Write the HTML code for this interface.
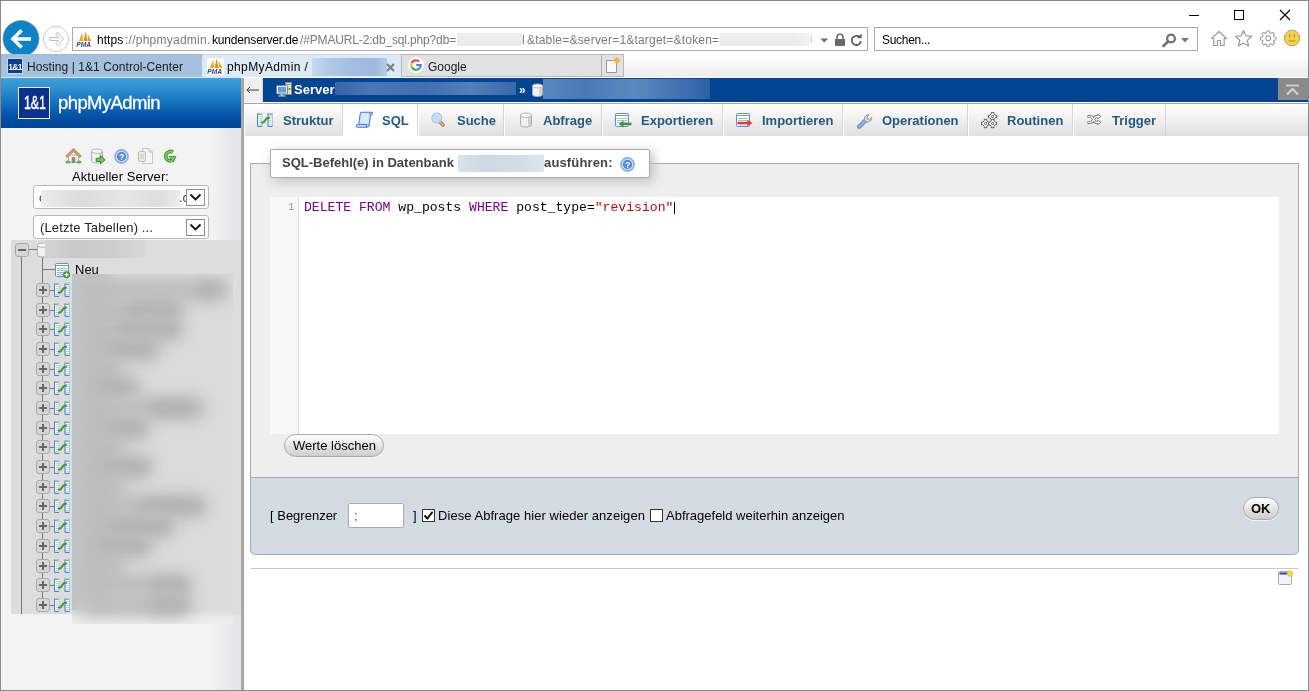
<!DOCTYPE html>
<html>
<head>
<meta charset="utf-8">
<title>phpMyAdmin</title>
<style>
*{box-sizing:border-box;margin:0;padding:0}
html,body{width:1309px;height:691px;overflow:hidden;background:#fff}
body{font-family:"Liberation Sans",sans-serif;font-size:13px;color:#000;position:relative}
.a{position:absolute}
#win{left:0;top:0;width:1309px;height:691px;background:#fff;overflow:hidden}
#frame{left:0;top:0;width:1309px;height:691px;border:1px solid #8a8a8a;pointer-events:none}
.t{position:absolute;white-space:nowrap;line-height:1}
.t,.mt span,svg.tx{will-change:transform}
/* browser chrome */
#addr{left:72px;top:27px;width:796px;height:24px;border:1px solid #ababab;background:#fff}
#srch{left:874px;top:27px;width:324px;height:24px;border:1px solid #ababab;background:#fff}
#tabbar{left:1px;top:55px;width:1307px;height:22px}
.tab{position:absolute;top:-1px;height:23px}
/* sidebar */
#side{left:1px;top:77px;width:240px;height:613px;background:#f3f3f3}
#shead{left:0;top:1px;width:240px;height:50px;background:linear-gradient(#3da1d9 0%,#2f91d0 20%,#1a76c0 45%,#0458ab 70%,#00489c 90%,#00469a 100%)}
#split{left:241px;top:78px;width:3px;height:612px;background:linear-gradient(90deg,#b0b0b0,#9f9f9f)}
/* main */
#main{left:244px;top:77px;width:1064px;height:613px;background:#fff}
#crumb{left:0;top:1px;width:1064px;height:24px;background:#004494}
#tabs{left:0;top:27px;width:1064px;height:32px;background:linear-gradient(#ffffff,#e0e0e0)}
.mt{position:absolute;top:0;height:32px;background:linear-gradient(#ffffff,#e0e0e0);border-right:1px solid #d5d5d5;border-left:1px solid #fff;font-weight:bold;font-size:13px;color:#235a81}
.mt span{position:absolute;top:9.600px;line-height:1;white-space:nowrap}
.mt.act{background:#fff}

.sel{width:176px;height:24px;border:1px solid #b9b9b9;border-radius:3px;background:#fff}
.sel .dd{z-index:2;position:absolute;right:3px;top:3px;width:19px;height:17px;border:1px solid #8e8e8e;background:#fdfdfd;display:flex;align-items:center;justify-content:center}
.pm{position:absolute;width:14px;height:14px;border:1px solid #a8a8a8;border-radius:3px;background:#d6d6d6}
.pm i.h{position:absolute;left:2px;top:5px;width:8px;height:2px;background:#666}
.pm i.v{position:absolute;left:5px;top:2px;width:2px;height:8px;background:#666}
.bl{position:absolute;background:#bcbcbc;border-radius:11px;filter:blur(8px)}
.bl2{position:absolute;background:#b2b2b2;border-radius:7px;filter:blur(7px)}

.btn{border:1px solid #aaa;border-radius:12px;background:linear-gradient(#ffffff,#cccccc);box-shadow:0 1px 0 #f4f4f4}
.cb{width:13px;height:13px;border:1px solid #333;background:#fff}
.cb svg{position:absolute;left:0;top:0}
</style>
</head>
<body>
<div id="win" class="a">


<!-- ===== browser chrome ===== -->
<div class="a" style="left:1px;top:52px;width:1307px;height:25px;background:linear-gradient(#ffffff 10%,#ededed 100%)"></div>
<!-- window buttons -->
<div class="a" style="left:1189px;top:15px;width:10px;height:1px;background:#000"></div>
<div class="a" style="left:1234px;top:10px;width:10px;height:10px;border:1px solid #000"></div>
<svg class="a" style="left:1279px;top:9px" width="12" height="12" viewBox="0 0 12 12"><path d="M1 1 L11 11 M11 1 L1 11" stroke="#000" stroke-width="1.1" fill="none"/></svg>
<!-- back / forward -->
<svg class="a" style="left:1px;top:19px" width="40" height="40" viewBox="0 0 40 40"><circle cx="20" cy="19.600" r="18" fill="#0b84c6" stroke="#7f8d96" stroke-width=".8"/><path d="M12.500 19.900 H29.900 M20.600 11.200 L11.900 19.900 L20.600 28.600" stroke="#fff" stroke-width="3.500" fill="none" stroke-linecap="butt" stroke-linejoin="miter"/></svg>
<svg class="a" style="left:42px;top:25px" width="28" height="28" viewBox="0 0 28 28"><circle cx="14" cy="14" r="12.600" fill="#fff" stroke="#c8c8c8" stroke-width="1"/><path d="M7.800 12.500 H16.600 L13.600 9.200 L15.600 7.400 L21.400 14 L15.600 20.600 L13.600 18.800 L16.600 15.500 H7.800Z" fill="#fff" stroke="#bfbfbf" stroke-width="1" stroke-linejoin="miter"/></svg>
<!-- address bar -->
<div id="addr" class="a">
  <svg class="a tx" style="left:3px;top:3px" width="17" height="17" viewBox="0 0 17 17"><path d="M3 10 L6.2 1.5 L7 10Z" fill="#f7a51c"/><path d="M7.6 10 L9.6 0.5 L11.6 10Z" fill="#f08a14"/><path d="M11.6 3 L15.6 10 L12.2 10Z" fill="#f7a51c"/><text x="0.3" y="16.3" font-family="Liberation Sans" font-size="6.6" font-weight="bold" font-style="italic" fill="#35457f">PMA</text></svg>
  <span class="t" style="left:24px;top:6px;font-size:12px;letter-spacing:.05px;color:#000">https</span>
  <span class="t" style="left:51.6px;top:6px;font-size:12px;letter-spacing:.25px;color:#7a7a7a">://phpmyadmin.</span>
  <span class="t" style="left:138.8px;top:6px;font-size:12px;letter-spacing:-.17px;color:#000">kundenserver.de</span>
  <span class="t" style="left:226.6px;top:6px;font-size:12px;letter-spacing:-.15px;color:#7a7a7a">/#PMAURL-2:db_sql.php?db=</span>
  <div class="a" style="left:384px;top:5px;width:65px;height:13px;background:#ececec"></div>
  <span class="t" style="left:448.6px;top:6px;font-size:12px;color:#7a7a7a">l</span>
  <span class="t" style="left:453.6px;top:6px;font-size:12px;letter-spacing:.2px;color:#7a7a7a">&amp;table=&amp;server=1&amp;target=&amp;token=</span>
  <div class="a" style="left:647px;top:5px;width:90px;height:13px;background:linear-gradient(90deg,#ececec 85%,#f4f4f4)"></div>
  <span class="t" style="left:736.500px;top:6px;font-size:11px;color:#c4c4c4">i</span>
  <svg class="a" style="left:746.500px;top:10px" width="8.500" height="5" viewBox="0 0 9 5"><path d="M0.3 0.3 H8.7 L4.5 4.600Z" fill="#6e6e6e"/></svg>
  <svg class="a" style="left:761px;top:5px" width="12" height="14" viewBox="0 0 12 14"><path d="M3 6.500 V4.200 A3 3 0 0 1 9 4.200 V6.500" stroke="#6a6a6a" stroke-width="1.600" fill="none"/><rect x="1" y="6" width="10" height="7" fill="#6a6a6a"/></svg>
  <svg class="a" style="left:777px;top:5px" width="13" height="14" viewBox="0 0 13 14"><path d="M9.800 4.300 A4.600 4.600 0 1 0 10.900 8.200" stroke="#5e5e5e" stroke-width="1.800" fill="none"/><path d="M6.800 5.300 H11.600 V0.500Z" fill="#5e5e5e"/></svg>
</div>
<!-- search box -->
<div id="srch" class="a">
  <span class="t" style="left:7px;top:6px;font-size:12px;letter-spacing:-.3px;color:#000">Suchen...</span>
  <svg class="a" style="left:287px;top:5px" width="15" height="15" viewBox="0 0 15 15"><circle cx="9" cy="5.500" r="3.900" stroke="#727272" stroke-width="2.300" fill="none"/><path d="M6 8.500 L1.500 13" stroke="#727272" stroke-width="2.600" stroke-linecap="round"/></svg>
  <svg class="a" style="left:306px;top:10px" width="8" height="5" viewBox="0 0 8 5"><path d="M0 0 H8 L4 4.5Z" fill="#7a7a7a"/></svg>
</div>
<!-- right icons -->
<svg class="a" style="left:1210px;top:30px" width="18" height="17" viewBox="0 0 18 17"><path d="M1.5 8.5 L9 1.5 L16.5 8.5 H14.2 V15.5 H10.5 V10.5 H7.5 V15.5 H3.8 V8.5Z" fill="#fff" stroke="#9b9b9b" stroke-width="1.2" stroke-linejoin="round"/></svg>
<svg class="a" style="left:1234px;top:29px" width="19" height="18" viewBox="0 0 19 18"><path d="M9.5 1.5 L11.9 6.9 L17.7 7.4 L13.3 11.3 L14.6 17 L9.5 14 L4.4 17 L5.7 11.3 L1.3 7.4 L7.1 6.9Z" fill="#fff" stroke="#9b9b9b" stroke-width="1.2" stroke-linejoin="round"/></svg>
<svg class="a" style="left:1260px;top:30px" width="16.500" height="16.500" viewBox="0 0 18 18"><g fill="#fff" stroke="#9b9b9b" stroke-width="1.1" stroke-linejoin="round"><path d="M7.6 1 h2.8 l.4 2.2 1.3.55 1.85-1.3 2 2 -1.3 1.85 .55 1.3 2.2.4 v2.8 l-2.2.4 -.55 1.3 1.3 1.85 -2 2 -1.85-1.3 -1.3.55 -.4 2.2 h-2.8 l-.4-2.2 -1.3-.55 -1.85 1.3 -2-2 1.3-1.85 -.55-1.3 -2.2-.4 v-2.8 l2.2-.4 .55-1.3 -1.3-1.85 2-2 1.85 1.3 1.3-.55z"/><circle cx="9" cy="9" r="2.6"/></g></svg>
<svg class="a" style="left:1283px;top:29px" width="18" height="18" viewBox="0 0 18 18"><circle cx="9" cy="9" r="7.8" fill="#f6d345" stroke="#a9a08a" stroke-width="1"/><rect x="6.100" y="5.200" width="1.300" height="3.200" fill="#a8923f"/><rect x="10.600" y="5.200" width="1.300" height="3.200" fill="#a8923f"/><path d="M5.600 10.800 Q9 13.800 12.400 10.800" stroke="#a8923f" stroke-width="1.100" fill="none"/></svg>

<!-- tab strip -->
<div id="tabbar" class="a">
  <div class="tab" style="left:0;width:201px;background:#a4c1dd;border-top:1px solid #9db9d5">
    <svg class="a tx" style="left:6px;top:3px" width="16" height="16" viewBox="0 0 16 16"><rect x=".5" y=".5" width="15" height="15" fill="#0d3d8c" stroke="#c9d6ea"/><text x="1.2" y="11.5" font-family="Liberation Sans" font-size="8.5" font-weight="bold" fill="#fff" letter-spacing="-.7">1&amp;1</text></svg>
    <span class="t" style="left:26px;top:5.600px;font-size:12px;letter-spacing:.08px;color:#1a1a1a">Hosting | 1&amp;1 Control-Center</span>
  </div>
  <div class="tab" style="left:201px;width:199px;background:#dceaf8;border-top:1px solid #c9d8e8">
    <svg class="a tx" style="left:5px;top:3px" width="17" height="17" viewBox="0 0 17 17"><rect width="17" height="17" fill="#fff"/><path d="M3 10 L6.2 1.5 L7 10Z" fill="#f7a51c"/><path d="M7.6 10 L9.6 0.5 L11.6 10Z" fill="#f08a14"/><path d="M11.6 3 L15.6 10 L12.2 10Z" fill="#f7a51c"/><text x="0.3" y="16.3" font-family="Liberation Sans" font-size="6.6" font-weight="bold" font-style="italic" fill="#35457f">PMA</text></svg>
    <span class="t" style="left:25px;top:6px;font-size:12px;letter-spacing:.38px;color:#000">phpMyAdmin /</span>
    <div class="a" style="left:110px;top:3px;width:75px;height:18px;background:linear-gradient(90deg,#c9dbef,#b4cbe6 18%,#a2bddf 55%,#9db9dc 85%,#b9cee8)"></div>
    <svg class="a" style="left:184px;top:8px" width="9" height="9" viewBox="0 0 9 9"><path d="M1 1 L8 8 M8 1 L1 8" stroke="#7c7f84" stroke-width="2.200"/></svg>
  </div>
  <div class="tab" style="left:400px;width:201px;background:#e1e1e1;border-top:1px solid #b9b9b9;border-bottom:1px solid #b9b9b9;border-right:1px solid #b0b0b0;border-left:1px solid #b9b9b9">
    <svg class="a" style="left:6px;top:2px" width="16" height="16" viewBox="0 0 16 16"><circle cx="8" cy="8" r="8" fill="#fff"/><path d="M8 3.2 A4.8 4.8 0 0 0 3.7 5.9" stroke="#ea4335" stroke-width="2.1" fill="none"/><path d="M8 3.2 A4.8 4.8 0 0 1 11.3 4.5" stroke="#ea4335" stroke-width="2.1" fill="none"/><path d="M3.7 5.9 A4.8 4.8 0 0 0 3.7 10.1" stroke="#fbbc05" stroke-width="2.1" fill="none"/><path d="M3.7 10.1 A4.8 4.8 0 0 0 11.2 11.6" stroke="#34a853" stroke-width="2.1" fill="none"/><path d="M11.2 11.6 A4.8 4.8 0 0 0 12.8 8 H8.2" stroke="#4285f4" stroke-width="2.1" fill="none"/></svg>
    <span class="t" style="left:26px;top:5.600px;font-size:12px;color:#1a1a1a">Google</span>
  </div>
  <div class="tab" style="left:601px;width:22px;background:#e1e1e1;border-top:1px solid #b9b9b9;border-bottom:1px solid #b9b9b9;border-right:1px solid #b9b9b9">
    <svg class="a" style="left:2px;top:1px" width="17" height="18" viewBox="0 0 17 18"><path d="M2.500 4.500 H12.500 V16.500 H2.500Z" fill="#fafafa" stroke="#9a9a9a"/><path d="M12.700 1 V8 M9.200 4.500 H16.200 M10.300 2.100 L15.100 6.900 M15.100 2.100 L10.300 6.900" stroke="#f7a823" stroke-width="1.050"/><circle cx="12.700" cy="4.500" r="1.500" fill="#f9b233"/></svg>
  </div>
</div>


<!-- ===== sidebar ===== -->
<svg width="0" height="0" style="position:absolute">
 <defs>
  <g id="i-tbl">
   <rect x=".5" y="1.5" width="4.5" height="12.5" fill="#fdfdff" stroke="#a9c6ee"/><path d="M.5 1.5 V14.5 H5" fill="none" stroke="#4f86d6"/>
   <path d="M1 2.500 H4.5" stroke="#7cc05a"/><path d="M1.5 4.500 H4.5 M1.5 6.500 H4.5 M1.5 8.500 H4.5 M1.5 10.500 H4.5 M1.5 12.500 H4.5" stroke="#c2d4ee"/>
   <rect x="11" y="1.5" width="4.5" height="12.5" fill="#fdfdff" stroke="#a9c6ee"/><path d="M11 1.5 V14.5 H15.5" fill="none" stroke="#4f86d6"/>
   <path d="M11.500 2.500 H15" stroke="#7cc05a"/><path d="M12 4.500 H15 M12 6.500 H15 M12 8.500 H15 M12 10.500 H15 M12 12.500 H15" stroke="#c2d4ee"/>
   <path d="M4.800 10.600 L6.800 10.200 L9.800 6.200 L12 5.800" stroke="#3f9a2f" stroke-width="2.100" stroke-linecap="round" stroke-linejoin="round" fill="none"/>
  </g>
  <g id="i-db">
   <path d="M1.5 3.2 V12.8 C1.5 14.2 4 15 7 15 C10 15 12.5 14.2 12.5 12.8 V3.2" fill="#f1f1f1" stroke="#b0b0b0"/>
   <path d="M9 4.6 V14.6 C11 14.3 12 13.6 12 12.8 V3.8Z" fill="#cfcfcf"/>
   <ellipse cx="7" cy="3.2" rx="5.5" ry="2.2" fill="#fafafa" stroke="#b5b5b5"/>
  </g>
  <g id="i-help">
   <circle cx="7" cy="7" r="6.400" fill="#7ea6e4" stroke="#8db0e8" stroke-width="1"/><circle cx="7" cy="7" r="4.900" fill="#5688d4" stroke="#dbe7f9" stroke-width="1"/>
   <text x="4.600" y="10" font-family="Liberation Sans" font-weight="bold" font-size="8.500" fill="#fff">?</text>
  </g>
 </defs>
</svg>
<div id="side" class="a">
  <div class="a" style="left:208px;top:51px;width:32px;height:562px;background:linear-gradient(90deg,#f3f3f3,#e0e4e6)"></div>
  <div class="a" style="left:0;top:0;width:240px;height:1px;background:#d9e8f5"></div>
  <div id="shead" class="a">
    <div class="a" style="left:17px;top:9px;width:32px;height:32px;background:#0a318c;border:1px solid #e8eef7"></div>
    <span class="t" style="left:23px;top:16px;font-size:18.6px;font-weight:normal;color:#fff;transform-origin:0 0;transform:scaleX(.66);-webkit-text-stroke:.6px #fff">1&amp;1</span>
    <span class="t" style="left:57px;top:15.5px;font-size:18.5px;letter-spacing:-.6px;color:#fff;-webkit-text-stroke:.3px #fff">phpMyAdmin</span>
  </div>
  <!-- toolbar icons -->
  <svg class="a" style="left:64px;top:71px" width="17" height="16" viewBox="0 0 17 16"><rect x="3.500" y="7" width="10" height="7.500" fill="#f2f2f2" stroke="#a3a3a3" stroke-width=".8"/><rect x="7" y="9.500" width="3" height="5" fill="#8e8e8e" stroke="#777" stroke-width=".5"/><ellipse cx="3" cy="14" rx="2.600" ry="1.600" fill="#62b544"/><ellipse cx="14" cy="14" rx="2.600" ry="1.600" fill="#62b544"/><path d="M1.200 9 L8.500 2 L15.800 9" stroke="#bf8646" stroke-width="2.800" fill="none" stroke-linejoin="miter"/><path d="M1.800 8.400 L8.500 2 L15.200 8.400" stroke="#e6c08c" stroke-width=".9" fill="none"/></svg>
  <svg class="a" style="left:89px;top:71px" width="17" height="17" viewBox="0 0 17 17"><use href="#i-db"/><path d="M6.200 10.200 H10.500 V7.800 L15.200 11.800 L10.500 15.800 V13.400 H6.200Z" fill="#78c456" stroke="#348a26" stroke-width="1"/></svg>
  <svg class="a tx" style="left:113px;top:72px" width="15" height="15" viewBox="0 0 14 14"><use href="#i-help"/></svg>
  <svg class="a" style="left:136px;top:70px" width="17" height="18" viewBox="0 0 17 18"><path d="M5.5 1.5 H12 L15.5 5 V16.5 H5.5Z" fill="#f6f6f6" stroke="#c4c4c4"/><path d="M12 1.5 V5 H15.5" fill="#e4e4e4" stroke="#c4c4c4"/><rect x="1.500" y="4.500" width="7" height="10" rx="1.500" fill="#ebebeb" stroke="#bdbdbd"/><path d="M4 7 V12 M6 7 V12" stroke="#c9c9c9"/></svg>
  <svg class="a" style="left:162px;top:72px" width="14" height="15" viewBox="0 0 14 15"><path d="M10 3.200 A4.700 4.700 0 1 0 8.200 11.800" stroke="#3c8f2f" stroke-width="3.600" fill="none"/><path d="M10 3.200 A4.700 4.700 0 1 0 8.200 11.800" stroke="#7cc65c" stroke-width="1.900" fill="none"/><path d="M6.200 7.400 H12.900 L10.200 13.200Z" fill="#7cc65c" stroke="#3c8f2f" stroke-width=".9" stroke-linejoin="round"/></svg>
  <span class="t" style="left:71px;top:93px;font-size:13px;letter-spacing:.05px">Aktueller Server:</span>
  <!-- select 1 -->
  <div class="a sel" style="left:32px;top:108px"><div class="dd"><svg width="13" height="9" viewBox="0 0 13 9"><path d="M1.500 1.500 L6.500 6.500 L11.500 1.500" stroke="#111" stroke-width="1.800" fill="none"/></svg></div>
    <span class="t" style="left:5px;top:5px;font-size:13px;color:#444">c</span>
    <div class="a" style="left:7px;top:4px;width:139px;height:17px;background:linear-gradient(90deg,#ececec,#dcdcdc 30%,#e6e6e6 60%,#dedede 85%,#ececec)"></div>
    <span class="t" style="left:145px;top:5px;font-size:13px;color:#444">.c</span>
  </div>
  <!-- select 2 -->
  <div class="a sel" style="left:32px;top:138px"><div class="dd"><svg width="13" height="9" viewBox="0 0 13 9"><path d="M1.500 1.500 L6.500 6.500 L11.500 1.500" stroke="#111" stroke-width="1.800" fill="none"/></svg></div>
    <span class="t" style="left:6px;top:5px;font-size:13px;letter-spacing:.13px;color:#222">(Letzte Tabellen) ...</span>
  </div>
  <!-- tree -->
  <div id="tree" class="a" style="left:10px;top:163px;width:230px;height:374px;background:#dddddd"></div>
  <div class="a" style="left:20px;top:180px;width:1px;height:357px;background:#777"></div>
  <div class="a" style="left:41px;top:180px;width:1px;height:341px;background:#777"></div>
  <div class="pm" style="left:14px;top:166px"><i class="h"></i></div>
  <div class="a" style="left:28px;top:172px;width:8px;height:1px;background:#777"></div>
  <svg class="a" style="left:34.500px;top:165px" width="14" height="16" viewBox="0 0 14 16"><use href="#i-db"/></svg>
  <div class="a" style="left:44px;top:163px;width:100px;height:18px;background:linear-gradient(90deg,#d3d3d3,#c9c9c9 30%,#cdcdcd 70%,#d9d9d9)"></div>
  <div class="a" style="left:42px;top:192px;width:12px;height:1px;background:#777"></div>
  <svg class="a" style="left:54px;top:186px" width="16" height="16" viewBox="0 0 16 16"><rect x=".5" y=".5" width="13" height="13" rx="1" fill="#fff" stroke="#5b8fd6"/><path d="M1 2.500 H13" stroke="#6ab04c"/><path d="M2 5.500 H12 M2 7.500 H12 M2 9.500 H12 M2 11.500 H12" stroke="#8fb0e0"/><path d="M5 4 V13 M9 4 V13" stroke="#c5d6ef" stroke-width=".8"/><circle cx="11.600" cy="11.700" r="3.200" fill="#3fa535" stroke="#2b7d25" stroke-width=".6"/><path d="M11.600 9.700 V13.700 M9.600 11.700 H13.600" stroke="#fff" stroke-width="1.200"/></svg>
  <span class="t" style="left:74px;top:186px;font-size:13px">Neu</span>
  <div class="pm" style="left:35px;top:206px"><i class="h"></i><i class="v"></i></div>
  <div class="a" style="left:49px;top:213px;width:4px;height:1px;background:#777"></div>
  <svg class="a" style="left:53px;top:205px" width="16" height="16" viewBox="0 0 16 16"><use href="#i-tbl"/></svg>
  <div class="pm" style="left:35px;top:226px"><i class="h"></i><i class="v"></i></div>
  <div class="a" style="left:49px;top:233px;width:4px;height:1px;background:#777"></div>
  <svg class="a" style="left:53px;top:225px" width="16" height="16" viewBox="0 0 16 16"><use href="#i-tbl"/></svg>
  <div class="pm" style="left:35px;top:245px"><i class="h"></i><i class="v"></i></div>
  <div class="a" style="left:49px;top:252px;width:4px;height:1px;background:#777"></div>
  <svg class="a" style="left:53px;top:244px" width="16" height="16" viewBox="0 0 16 16"><use href="#i-tbl"/></svg>
  <div class="pm" style="left:35px;top:265px"><i class="h"></i><i class="v"></i></div>
  <div class="a" style="left:49px;top:272px;width:4px;height:1px;background:#777"></div>
  <svg class="a" style="left:53px;top:264px" width="16" height="16" viewBox="0 0 16 16"><use href="#i-tbl"/></svg>
  <div class="pm" style="left:35px;top:285px"><i class="h"></i><i class="v"></i></div>
  <div class="a" style="left:49px;top:292px;width:4px;height:1px;background:#777"></div>
  <svg class="a" style="left:53px;top:284px" width="16" height="16" viewBox="0 0 16 16"><use href="#i-tbl"/></svg>
  <div class="pm" style="left:35px;top:304px"><i class="h"></i><i class="v"></i></div>
  <div class="a" style="left:49px;top:311px;width:4px;height:1px;background:#777"></div>
  <svg class="a" style="left:53px;top:303px" width="16" height="16" viewBox="0 0 16 16"><use href="#i-tbl"/></svg>
  <div class="pm" style="left:35px;top:324px"><i class="h"></i><i class="v"></i></div>
  <div class="a" style="left:49px;top:331px;width:4px;height:1px;background:#777"></div>
  <svg class="a" style="left:53px;top:323px" width="16" height="16" viewBox="0 0 16 16"><use href="#i-tbl"/></svg>
  <div class="pm" style="left:35px;top:344px"><i class="h"></i><i class="v"></i></div>
  <div class="a" style="left:49px;top:351px;width:4px;height:1px;background:#777"></div>
  <svg class="a" style="left:53px;top:343px" width="16" height="16" viewBox="0 0 16 16"><use href="#i-tbl"/></svg>
  <div class="pm" style="left:35px;top:363px"><i class="h"></i><i class="v"></i></div>
  <div class="a" style="left:49px;top:370px;width:4px;height:1px;background:#777"></div>
  <svg class="a" style="left:53px;top:362px" width="16" height="16" viewBox="0 0 16 16"><use href="#i-tbl"/></svg>
  <div class="pm" style="left:35px;top:383px"><i class="h"></i><i class="v"></i></div>
  <div class="a" style="left:49px;top:390px;width:4px;height:1px;background:#777"></div>
  <svg class="a" style="left:53px;top:382px" width="16" height="16" viewBox="0 0 16 16"><use href="#i-tbl"/></svg>
  <div class="pm" style="left:35px;top:403px"><i class="h"></i><i class="v"></i></div>
  <div class="a" style="left:49px;top:410px;width:4px;height:1px;background:#777"></div>
  <svg class="a" style="left:53px;top:402px" width="16" height="16" viewBox="0 0 16 16"><use href="#i-tbl"/></svg>
  <div class="pm" style="left:35px;top:422px"><i class="h"></i><i class="v"></i></div>
  <div class="a" style="left:49px;top:429px;width:4px;height:1px;background:#777"></div>
  <svg class="a" style="left:53px;top:421px" width="16" height="16" viewBox="0 0 16 16"><use href="#i-tbl"/></svg>
  <div class="pm" style="left:35px;top:442px"><i class="h"></i><i class="v"></i></div>
  <div class="a" style="left:49px;top:449px;width:4px;height:1px;background:#777"></div>
  <svg class="a" style="left:53px;top:441px" width="16" height="16" viewBox="0 0 16 16"><use href="#i-tbl"/></svg>
  <div class="pm" style="left:35px;top:462px"><i class="h"></i><i class="v"></i></div>
  <div class="a" style="left:49px;top:469px;width:4px;height:1px;background:#777"></div>
  <svg class="a" style="left:53px;top:461px" width="16" height="16" viewBox="0 0 16 16"><use href="#i-tbl"/></svg>
  <div class="pm" style="left:35px;top:482px"><i class="h"></i><i class="v"></i></div>
  <div class="a" style="left:49px;top:489px;width:4px;height:1px;background:#777"></div>
  <svg class="a" style="left:53px;top:481px" width="16" height="16" viewBox="0 0 16 16"><use href="#i-tbl"/></svg>
  <div class="pm" style="left:35px;top:501px"><i class="h"></i><i class="v"></i></div>
  <div class="a" style="left:49px;top:508px;width:4px;height:1px;background:#777"></div>
  <svg class="a" style="left:53px;top:500px" width="16" height="16" viewBox="0 0 16 16"><use href="#i-tbl"/></svg>
  <div class="pm" style="left:35px;top:521px"><i class="h"></i><i class="v"></i></div>
  <div class="a" style="left:49px;top:528px;width:4px;height:1px;background:#777"></div>
  <svg class="a" style="left:53px;top:520px" width="16" height="16" viewBox="0 0 16 16"><use href="#i-tbl"/></svg>
  <!-- blur overlay -->
  <div class="a" style="left:71px;top:197px;width:161px;height:350px;background:linear-gradient(#dbdbdb 0,#dbdbdb 336px,#e9e9e9 343px,#ececec 350px);overflow:hidden">
    <div class="a" style="left:-14px;top:-14px;width:54px;height:346px;background:#c3c4c4;filter:blur(7px)"></div>
    <div class="a" style="left:0;top:0;width:10px;height:336px;background:linear-gradient(90deg,#bcc5c8,rgba(195,200,202,0))"></div>
    <div class="bl" style="left:8px;top:5px;width:145px;height:22px"></div>
    <div class="bl2" style="left:123px;top:9px;width:31px;height:14px"></div>
    <div class="bl" style="left:8px;top:25px;width:103px;height:22px"></div>
    <div class="bl2" style="left:53px;top:29px;width:55px;height:14px"></div>
    <div class="bl" style="left:8px;top:44px;width:103px;height:22px"></div>
    <div class="bl2" style="left:46px;top:48px;width:62px;height:14px"></div>
    <div class="bl" style="left:8px;top:64px;width:80px;height:22px"></div>
    <div class="bl2" style="left:36px;top:68px;width:48px;height:14px"></div>
    <div class="bl" style="left:8px;top:84px;width:45px;height:22px"></div>
    <div class="bl" style="left:8px;top:103px;width:60px;height:22px"></div>
    <div class="bl2" style="left:28px;top:107px;width:36px;height:14px"></div>
    <div class="bl" style="left:8px;top:123px;width:123px;height:22px"></div>
    <div class="bl2" style="left:76px;top:127px;width:52px;height:14px"></div>
    <div class="bl" style="left:8px;top:143px;width:70px;height:22px"></div>
    <div class="bl2" style="left:36px;top:147px;width:38px;height:14px"></div>
    <div class="bl" style="left:8px;top:162px;width:48px;height:22px"></div>
    <div class="bl" style="left:8px;top:182px;width:72px;height:22px"></div>
    <div class="bl2" style="left:32px;top:186px;width:46px;height:14px"></div>
    <div class="bl" style="left:8px;top:202px;width:48px;height:22px"></div>
    <div class="bl" style="left:8px;top:221px;width:125px;height:22px"></div>
    <div class="bl2" style="left:66px;top:225px;width:67px;height:14px"></div>
    <div class="bl" style="left:8px;top:241px;width:95px;height:22px"></div>
    <div class="bl2" style="left:36px;top:245px;width:64px;height:14px"></div>
    <div class="bl" style="left:8px;top:261px;width:72px;height:22px"></div>
    <div class="bl2" style="left:28px;top:265px;width:50px;height:14px"></div>
    <div class="bl" style="left:8px;top:281px;width:48px;height:22px"></div>
    <div class="bl" style="left:8px;top:300px;width:110px;height:22px"></div>
    <div class="bl2" style="left:78px;top:304px;width:40px;height:14px"></div>
    <div class="bl" style="left:8px;top:320px;width:110px;height:22px"></div>
    <div class="bl2" style="left:76px;top:324px;width:42px;height:14px"></div>
  </div>
</div>
<div id="split" class="a"></div>


<!-- ===== main ===== -->
<div id="main" class="a">
  <div id="crumb" class="a">
    <div class="a" style="left:0;top:0;width:19px;height:24px;background:#f0f0f0;border-right:1px solid #d4d4d4"></div>
    <svg class="a" style="left:2px;top:8px" width="14" height="8" viewBox="0 0 14 8"><path d="M13 4 H1 M4 1 L0.800 4 L4 7" stroke="#3a3a3a" stroke-width="1" fill="none"/></svg>
    <svg class="a" style="left:32px;top:4px" width="17" height="16" viewBox="0 0 17 16"><rect x="9.500" y=".5" width="6" height="12" fill="#e4e0d4" stroke="#8f8a7a"/><rect x="10.500" y="2" width="4" height="1" fill="#8f8a7a"/><rect x="12.500" y="6" width="2" height="2" fill="#4caf3a"/><rect x=".5" y="3.500" width="11" height="8.500" rx=".8" fill="#dfe7f3" stroke="#7f8794"/><rect x="2" y="5" width="8" height="5.500" fill="#5da0e6"/><path d="M4.500 12 H7.500 V13.500 H9.500 V14.500 H2.500 V13.500 H4.500Z" fill="#b9bec8" stroke="#8a8f99" stroke-width=".5"/></svg>
    <span class="t" style="left:50px;top:5px;font-size:13px;font-weight:bold;color:#fff">Server</span>
    <div class="a" style="left:91px;top:4px;width:181px;height:13px;background:linear-gradient(90deg,#3565a8,#4a78b6 20%,#416fb0 50%,#5380ba 75%,#3a69ab)"></div>
    <span class="t" style="left:275px;top:6px;font-size:12px;font-weight:bold;color:#fff">»</span>
    <svg class="a" style="left:287px;top:5px" width="13" height="14.5" viewBox="0 0 14 16"><use href="#i-db"/></svg>
    <div class="a" style="left:299px;top:1px;width:167px;height:20px;background:linear-gradient(90deg,#5a86be,#4a79b6 25%,#5c88c0 55%,#4473b2 80%,#2c60a6)"></div>
    <div class="a" style="left:1034px;top:0;width:30px;height:22px;background:#8b8b8b"></div>
    <svg class="a" style="left:1041px;top:6px" width="15" height="12" viewBox="0 0 15 12"><path d="M1 1.500 H14" stroke="#d4d4d4" stroke-width="1.800"/><path d="M2 10.500 L7.500 5 L13 10.500" stroke="#d4d4d4" stroke-width="2" fill="none"/></svg>
  </div>
  <div class="a" style="left:0;top:26px;width:1064px;height:1px;background:#a6a6a6"></div>
  <div id="tabs" class="a">
    <div class="mt" style="left:0px;width:99px"><svg class="a" style="left:12px;top:8px" width="16" height="16" viewBox="0 0 16 16"><use href="#i-tbl"/></svg><span style="left:37.8px">Struktur</span></div>
    <div class="mt act" style="left:99px;width:75px"><svg class="a" style="left:11px;top:7px" width="18" height="18" viewBox="0 0 18 18"><g transform="translate(2.2 0) skewX(-7)"><path d="M4.500 1.200 H14.300 C16 1.200 16 4 14.300 4 H13.800 V13.500 C13.800 15.800 12.600 16.300 11.200 16.300 H2.300 C.7 16.300 .7 13.600 2.300 13.600 H3.300 V2.800 C3.300 1.800 3.800 1.200 4.500 1.200Z" fill="#c7dbf6" stroke="#4b7cc6" stroke-width="1"/><path d="M3.300 13.600 H11.600 C10.600 14.100 10.600 15.700 11.600 16.300" fill="none" stroke="#4b7cc6"/><path d="M5 2.800 H12.300 V12.400 H5Z" fill="#dce9fb"/><path d="M13.800 4 C12.800 3.800 12.800 1.600 13.900 1.300" fill="none" stroke="#4b7cc6" stroke-width=".8"/></g></svg><span style="left:37.8px">SQL</span></div>
    <div class="mt" style="left:174px;width:86px"><svg class="a" style="left:12px;top:8px" width="16" height="16" viewBox="0 0 16 16"><path d="M8.800 9.800 L12 13" stroke="#a8743a" stroke-width="3.600" stroke-linecap="round"/><path d="M8.800 9.800 L12 13" stroke="#e0b06a" stroke-width="1.800" stroke-linecap="round"/><circle cx="5.800" cy="6" r="4.900" fill="#cfe2f8" stroke="#a9c6ec" stroke-width="1.200"/><circle cx="5.800" cy="6" r="3" fill="#c2daf6"/></svg><span style="left:37.8px">Suche</span></div>
    <div class="mt" style="left:260px;width:98px"><svg class="a" style="left:14px;top:8px" width="14" height="16" viewBox="0 0 14 16"><use href="#i-db"/></svg><span style="left:37.8px">Abfrage</span></div>
    <div class="mt" style="left:358px;width:121px"><svg class="a" style="left:12px;top:9px" width="17" height="16" viewBox="0 0 17 16"><rect x=".5" y=".5" width="13" height="13" rx="1" fill="#fff" stroke="#5b8fd6"/><path d="M1 2.500 H13" stroke="#6ab04c"/><path d="M2 5.500 H12 M2 7.500 H12 M2 9.500 H12" stroke="#a8c0e6"/><path d="M16.500 11 H8" stroke="#3f9a2f" stroke-width="2.600"/><path d="M8.500 7.500 L3.500 11 L8.500 14.500Z" fill="#3f9a2f"/></svg><span style="left:37.8px">Exportieren</span></div>
    <div class="mt" style="left:479px;width:120px"><svg class="a" style="left:12px;top:9px" width="17" height="16" viewBox="0 0 17 16"><rect x=".5" y=".5" width="13" height="13" rx="1" fill="#fff" stroke="#5b8fd6"/><path d="M1 2.500 H13" stroke="#6ab04c"/><path d="M2 5.500 H12 M2 7.500 H12 M2 12 H12" stroke="#a8c0e6"/><path d="M1.500 10 H12" stroke="#e8392d" stroke-width="2.400"/><path d="M11.500 6.800 L16.500 10 L11.500 13.200Z" fill="#e8392d"/></svg><span style="left:37.8px">Importieren</span></div>
    <div class="mt" style="left:599px;width:125px"><svg class="a" style="left:12px;top:9px" width="17" height="17" viewBox="0 0 17 17"><path d="M3.200 13.800 L9.500 7.500" stroke="#5f8fd8" stroke-width="4.200" stroke-linecap="round"/><path d="M3.200 13.800 L9.500 7.500" stroke="#8fb4ea" stroke-width="2" stroke-linecap="round"/><path d="M9 8 C7.500 5 9.500 1.500 13 1.800 L11 4 L11.500 6 L13.500 6.500 L15.700 4.500 C16 8 12.500 10 9.500 8.500Z" fill="#d9d9d9" stroke="#8a8a8a" stroke-width=".9"/></svg><span style="left:37.8px">Operationen</span></div>
    <div class="mt" style="left:724px;width:105px"><svg class="a" style="left:12px;top:8px" width="18" height="18" viewBox="0 0 18 18"><g fill="#fdfdfd" stroke="#4a4a4a" stroke-width=".9" stroke-linejoin="round"><path d="M14.43 3.22 L15.78 3.14 L15.78 5.86 L14.43 5.78 L12.88 7.33 L12.96 8.68 L10.24 8.68 L10.32 7.33 L8.77 5.78 L7.42 5.86 L7.42 3.14 L8.77 3.22 L10.32 1.67 L10.24 0.32 L12.96 0.32 L12.88 1.67Z"/><circle cx="11.6" cy="4.5" r="1.1"/><path d="M7.43 10.22 L8.78 10.14 L8.78 12.86 L7.43 12.78 L5.88 14.33 L5.96 15.68 L3.24 15.68 L3.32 14.33 L1.77 12.78 L0.42 12.86 L0.42 10.14 L1.77 10.22 L3.32 8.67 L3.24 7.32 L5.96 7.32 L5.88 8.67Z"/><circle cx="4.6" cy="11.5" r="1.1"/><path d="M14.43 10.22 L15.78 10.14 L15.78 12.86 L14.43 12.78 L12.88 14.33 L12.96 15.68 L10.24 15.68 L10.32 14.33 L8.77 12.78 L7.42 12.86 L7.42 10.14 L8.77 10.22 L10.32 8.67 L10.24 7.32 L12.96 7.32 L12.88 8.67Z"/><circle cx="11.6" cy="11.5" r="1.1"/></g></svg><span style="left:37.8px">Routinen</span></div>
    <div class="mt" style="left:829px;width:93px"><svg class="a" style="left:13px;top:10px" width="15" height="11" viewBox="0 0 15 11"><g fill="none" stroke-linecap="butt"><path d="M.5 2.600 H3.600 C6.600 2.600 6.400 8.400 9.400 8.400 H11 M.5 8.400 H3.600 C6.600 8.400 6.400 2.600 9.400 2.600 H11" stroke="#7d7d7d" stroke-width="3"/><path d="M10.600 .3 L13.900 2.600 L10.600 4.900Z M10.600 6.100 L13.900 8.400 L10.600 10.700Z" fill="#fbfbfb" stroke="#7d7d7d" stroke-width=".9" stroke-linejoin="round"/><path d="M1.300 2.600 H3.600 C6.600 2.600 6.400 8.400 9.400 8.400 H11.500 M1.300 8.400 H3.600 C6.600 8.400 6.400 2.600 9.400 2.600 H11.500" stroke="#fbfbfb" stroke-width="1.200"/></g></svg><span style="left:37.8px">Trigger</span></div>
  </div>

  <!-- fieldset -->
  <div class="a" style="left:6px;top:86px;width:1049px;height:315px;background:#eeeeee;border:1px solid #aaa;border-bottom:0"></div>
  <div class="a" style="left:6px;top:400px;width:1049px;height:78px;background:#d3dce3;border:1px solid #aaa;border-radius:0 0 5px 5px"></div>
  <!-- legend -->
  <div class="a" style="left:26px;top:72px;width:380px;height:29px;background:#fff;border:1px solid #aaa;border-radius:2px;box-shadow:3px 3px 12px #bdbdbd">
    <span class="t" style="left:11px;top:6px;font-size:13px;font-weight:bold;color:#444">SQL-Befehl(e) in Datenbank</span>
    <div class="a" style="left:187px;top:5px;width:86px;height:17px;background:linear-gradient(90deg,#dbe3ea,#cdd8e2 30%,#d3dde6 70%,#dfe6ec)"></div>
    <span class="t" style="left:272.500px;top:6px;font-size:13px;font-weight:bold;letter-spacing:.15px;color:#444">ausführen:</span>
    <svg class="a tx" style="left:349px;top:7px" width="15" height="15" viewBox="0 0 14 14"><use href="#i-help"/></svg>
  </div>
  <!-- codemirror -->
  <div class="a" style="left:26px;top:120px;width:1009px;height:237px;background:#fff">
    <div class="a" style="left:0;top:0;width:29px;height:237px;background:#f7f7f7;border-right:1px solid #ddd"></div>
    <span class="t" style="left:18px;top:5px;font-family:'Liberation Mono',monospace;font-size:11px;color:#999">1</span>
    <span class="t" style="left:34px;top:3.500px;font-family:'Liberation Mono',monospace;font-size:13.1px;color:#000"><span style="color:#708">DELETE</span> <span style="color:#708">FROM</span> wp_posts <span style="color:#708">WHERE</span> post_type=<span style="color:#a11">"revision"</span></span>
    <div class="a" style="left:404px;top:5px;width:1px;height:12px;background:#000"></div>
  </div>
  <!-- buttons -->
  <div class="a btn" style="left:40px;top:357px;width:100px;height:23px"><span class="t" style="left:8px;top:4px;font-size:13px">Werte löschen</span></div>
  <!-- footer -->
  <span class="t" style="left:26px;top:432px;font-size:13px">[ Begrenzer</span>
  <div class="a" style="left:104px;top:426px;width:56px;height:25px;background:#fff;border:1px solid #aaa;border-radius:2px"><span class="t" style="left:5px;top:5px;font-size:13px;color:#555">;</span></div>
  <span class="t" style="left:169px;top:432px;font-size:13px">]</span>
  <div class="a cb" style="left:178px;top:432px"><svg width="11" height="11" viewBox="0 0 11 11"><path d="M1.500 5.500 L4.300 8.500 L9.500 1.800" stroke="#111" stroke-width="1.900" fill="none"/></svg></div>
  <span class="t" style="left:194px;top:432px;font-size:13px;letter-spacing:.05px">Diese Abfrage hier wieder anzeigen</span>
  <div class="a cb" style="left:406px;top:432px"></div>
  <span class="t" style="left:422px;top:432px;font-size:13px">Abfragefeld weiterhin anzeigen</span>
  <div class="a btn" style="left:999px;top:420px;width:36px;height:23px"><span class="t" style="left:7px;top:4px;font-size:13px;font-weight:bold">OK</span></div>
  <!-- hr + icon -->
  <div class="a" style="left:7px;top:491px;width:1047px;height:1px;background:#c8c8c8"></div>
  <svg class="a" style="left:1034px;top:493px" width="16" height="16" viewBox="0 0 16 16"><rect x=".5" y="1.500" width="13" height="13" rx="1" fill="#f4f4f4" stroke="#a9a9a9"/><rect x="1.500" y="2.500" width="8" height="2" fill="#2d4fa0"/><circle cx="12" cy="3.500" r="2.800" fill="#f6d84a" stroke="#e3b81f" stroke-width=".6"/></svg>
</div>

<div id="frame" class="a"></div>
</div>
</body>
</html>
